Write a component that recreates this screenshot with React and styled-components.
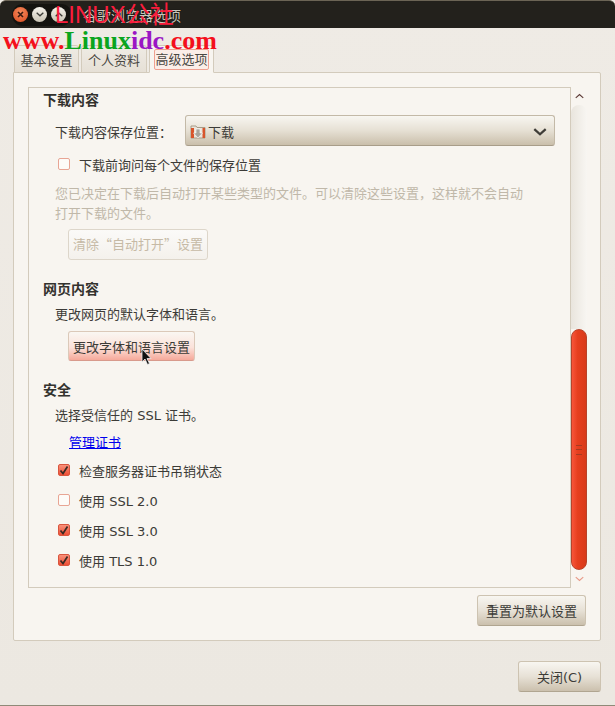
import styled, { createGlobalStyle } from 'styled-components';

const GlobalStyle = createGlobalStyle`
  html, body {
    margin: 0;
    padding: 0;
    background: #efebe4;
  }
  body {
    font-family: "DejaVu Sans", "Noto Sans CJK SC", sans-serif;
    font-size: 13px;
    color: #3c3b37;
  }
`;

const Window = styled.div`
  position: relative;
  width: 615px;
  height: 706px;
  display: flex;
  flex-direction: column;
  overflow: hidden;
  background: linear-gradient(#efebe5, #ece8e1);
  border-bottom: 1px solid #8f8a78;
  box-sizing: border-box;
`;

const TitleBar = styled.div`
  height: 28px;
  flex: none;
  display: flex;
  align-items: center;
  padding-left: 12px;
  background: #23211c;
  border-top: 1px solid #6b6455;
  border-radius: 6px 6px 0 0;
  box-sizing: border-box;
`;

const Controls = styled.div`
  display: flex;
  align-items: center;
  gap: 4px;
  height: 22px;
  width: 60px;
  padding-left: 1px;
  box-sizing: border-box;
  border-radius: 11px;
  background: #14130f;
`;

const Control = styled.span`
  width: 15px;
  height: 15px;
  border-radius: 50%;
  display: flex;
  align-items: center;
  justify-content: center;
  background: ${(p) =>
    p.$close
      ? 'radial-gradient(circle at 50% 35%, #f58a5c, #d94a1f)'
      : 'linear-gradient(#f6f3ec, #c9c3b4)'};
`;

const Title = styled.div`
  margin-left: 11px;
  font-size: 14px;
  color: #c9c6bd;
  text-shadow: 0 0 1px #000;
`;

const Body = styled.div`
  flex: 1;
  display: flex;
  flex-direction: column;
  padding: 17px 14px 0 13px;
  min-height: 0;
`;

const Tabs = styled.div`
  display: flex;
  gap: 2px;
  height: 28px;
  padding-left: 1px;
  position: relative;
  z-index: 1;
  margin-bottom: -1px;
`;

const Tab = styled.div`
  display: flex;
  align-items: center;
  justify-content: center;
  width: ${(p) => p.$width}px;
  box-sizing: border-box;
  padding-top: ${(p) => (p.$active ? 0 : 2)}px;
  border: 1px solid #d3cbbc;
  border-bottom: ${(p) => (p.$active ? '1px solid #f8f5f0' : '1px solid #d3cbbc')};
  border-radius: 3px 3px 0 0;
  background: ${(p) => (p.$active ? '#f8f5f0' : 'linear-gradient(#efebe4, #e6e0d6)')};
  color: #4a4843;
`;

const TabLabel = styled.span`
  height: 19px;
  line-height: 19px;
  width: 54px;
  text-align: center;
  ${(p) =>
    p.$active &&
    `
    border: 1px solid #f0a090;
    background: #fbeee8;
    border-radius: 2px;
    width: 53px;
  `}
`;

const Panel = styled.div`
  height: 569px;
  flex: none;
  box-sizing: border-box;
  background: #f8f5f0;
  border: 1px solid #d3cbbc;
  border-radius: 0 2px 2px 2px;
  padding: 14px 14px 0;
  display: flex;
  flex-direction: column;
`;

const ScrollRow = styled.div`
  display: flex;
  height: 501px;
  flex: none;
`;

const Frame = styled.div`
  width: 543px;
  flex: none;
  box-sizing: border-box;
  border: 1px solid #d3cbbc;
  padding-left: 14px;
  padding-top: 2px;
  display: flex;
  flex-direction: column;
  overflow: hidden;
`;

const Heading = styled.div`
  height: 20px;
  line-height: 20px;
  font-size: 14px;
  font-weight: 700;
  color: #33322e;
  margin-top: ${(p) => p.$top || 0}px;
`;

const Line = styled.div`
  height: 20px;
  line-height: 22px;
  padding-left: 12px;
  white-space: nowrap;
  margin-top: ${(p) => p.$top || 0}px;
  color: ${(p) => (p.$muted ? '#c0b8a9' : '#3c3b37')};
`;

const SelectRow = styled.div`
  display: flex;
  align-items: center;
  padding-left: 12px;
  margin-top: 5px;
`;

const SelectLabel = styled.span`
  width: 130px;
  flex: none;
  padding-top: 2px;
`;

const Select = styled.div`
  width: 370px;
  height: 31px;
  box-sizing: border-box;
  display: flex;
  align-items: center;
  gap: 2px;
  padding: 2px 7px 0 4px;
  border: 1px solid #c3b9a7;
  border-bottom-color: #a89d89;
  border-radius: 3px;
  background: linear-gradient(#f8f6f1, #e6e0d4 50%, #cabfab);
`;

const SelectValue = styled.span`
  flex: 1;
`;

const CheckRow = styled.label`
  display: flex;
  align-items: center;
  height: 20px;
  padding-left: 15px;
  margin-top: ${(p) => p.$top || 0}px;
`;

const Box = styled.span`
  width: 12px;
  height: 12px;
  flex: none;
  box-sizing: border-box;
  margin-right: 9px;
  border: 1px solid ${(p) => (p.$on ? '#d9553d' : '#e8a594')};
  border-radius: 2px;
  display: flex;
  align-items: center;
  justify-content: center;
  background: ${(p) => (p.$on ? 'linear-gradient(#f8907a, #ee4f35)' : '#fdfbf8')};
`;

const Button = styled.div`
  display: flex;
  align-items: center;
  justify-content: center;
  box-sizing: border-box;
  width: ${(p) => p.$width}px;
  height: 31px;
  flex: none;
  border: 1px solid #cdc3b1;
  border-bottom-color: #b0a590;
  border-radius: 3px;
  background: linear-gradient(#f8f6f1, #e7e1d6 50%, #cbc0ad);
  color: #3c3b37;
`;

const ClearButton = styled(Button)`
  margin: 6px 0 0 25px;
  padding-bottom: 2px;
  border-color: #ddd6ca;
  background: linear-gradient(#fbfaf8, #f4f1ec);
  color: #c6baa6;
  font-family: "Noto Sans CJK SC", sans-serif;
`;

const FontButton = styled(Button)`
  height: 30px;
  margin: 7px 0 0 25px;
  border-color: #dbc9b9;
  border-bottom-color: #d89a8c;
  background: linear-gradient(#faf7f2, #fbe2da 55%, #f6a99a);
`;

const Link = styled.a`
  display: block;
  width: max-content;
  height: 20px;
  line-height: 22px;
  margin: 7px 0 0 26px;
  color: #0000ee;
  text-decoration: underline;
`;

const Scrollbar = styled.div`
  width: 16px;
  display: flex;
  flex-direction: column;
  align-items: center;
`;

const Arrow = styled.div`
  height: ${(p) => p.$height}px;
  flex: none;
  display: flex;
  align-items: center;
  justify-content: center;
`;

const Track = styled.div`
  flex: 1;
  width: 16px;
  display: flex;
  flex-direction: column;
`;

const TrackFill = styled.div`
  flex: 1;
  border-radius: 8px 8px 0 0;
  background: linear-gradient(90deg, #e9e5dd, #f8f6f2);
`;

const Thumb = styled.div`
  height: 241px;
  flex: none;
  box-sizing: border-box;
  border: 1px solid #b8432a;
  border-radius: 8px;
  background: linear-gradient(90deg, #f7553a, #e63f1e 40%, #d83a1a);
  display: flex;
  align-items: center;
  justify-content: center;
`;

const Grip = styled.div`
  width: 6px;
  height: 8px;
  border-top: 1px solid #a83a20;
  border-bottom: 1px solid #a83a20;
  &::after {
    content: '';
    display: block;
    height: 1px;
    margin-top: 3px;
    background: #a83a20;
  }
`;

const PanelFooter = styled.div`
  display: flex;
  justify-content: flex-end;
  padding-top: 7px;
`;

const Footer = styled.div`
  display: flex;
  justify-content: flex-end;
  padding-top: 20px;
`;

const WatermarkTop = styled.div`
  position: absolute;
  z-index: 2;
  left: 55px;
  top: 1px;
  font-family: "Liberation Sans", "Noto Sans CJK SC", sans-serif;
  font-size: 24px;
  line-height: 28px;
  color: #fb1c3c;
  white-space: nowrap;
`;

const Watermark = styled.div`
  position: absolute;
  z-index: 2;
  left: 3px;
  top: 26px;
  font-family: "Liberation Serif", serif;
  font-size: 26px;
  font-weight: 700;
  line-height: 30px;
  white-space: nowrap;
  color: #f4101c;
`;

const Mark = styled.span`
  color: ${(p) => p.$color};
`;

const Cursor = styled.svg`
  position: absolute;
  z-index: 2;
  left: 141px;
  top: 348px;
`;

function Tick() {
  return (
    <svg width="10" height="10" viewBox="0 0 10 10">
      <path d="M1.5 5.5 L4 8.5 L8.5 1.5" fill="none" stroke="#3a2a24" strokeWidth="1.7" />
    </svg>
  );
}

function Check({ on, label, top }) {
  return (
    <CheckRow $top={top}>
      <Box $on={on}>{on && <Tick />}</Box>
      {label}
    </CheckRow>
  );
}

function Chevron({ up, color, width = 12, height = 7, weight = 2 }) {
  return (
    <svg width={width} height={height} viewBox="0 0 12 7">
      <path
        d={up ? 'M1 6 L6 1.5 L11 6' : 'M1 1 L6 5.5 L11 1'}
        fill="none"
        stroke={color}
        strokeWidth={weight}
      />
    </svg>
  );
}

function FolderIcon() {
  return (
    <svg width="16" height="16" viewBox="0 0 16 16">
      <path d="M1 2 H6 L7 3.5 H15 V14 H1 Z" fill="#e9e4da" stroke="#a89c88" />
      <rect x="1" y="4" width="3" height="10" fill="#d8552c" />
      <rect x="12.5" y="4" width="2.5" height="10" fill="#d8552c" />
      <path d="M6 5 H10 V9 H12.5 L8 14 L3.5 9 H6 Z" fill="#a9a59c" stroke="#fff" strokeWidth="0.6" />
    </svg>
  );
}

export default function App() {
  return (
    <Window>
      <GlobalStyle />
      <TitleBar>
        <Controls>
          <Control $close>
            <svg width="7" height="7" viewBox="0 0 7 7">
              <path d="M1 1 L6 6 M6 1 L1 6" stroke="#3a1a10" strokeWidth="1.6" />
            </svg>
          </Control>
          <Control>
            <Chevron color="#3c3b37" width="8" height="5" weight="2" />
          </Control>
          <Control>
            <Chevron up color="#3c3b37" width="8" height="5" weight="2" />
          </Control>
        </Controls>
        <Title>谷歌浏览器选项</Title>
      </TitleBar>
      <Body>
        <Tabs>
          <Tab $width={65}>
            <TabLabel>基本设置</TabLabel>
          </Tab>
          <Tab $width={66}>
            <TabLabel>个人资料</TabLabel>
          </Tab>
          <Tab $width={65} $active>
            <TabLabel $active>高级选项</TabLabel>
          </Tab>
        </Tabs>
        <Panel>
          <ScrollRow>
            <Frame>
              <Heading>下载内容</Heading>
              <SelectRow>
                <SelectLabel>下载内容保存位置：</SelectLabel>
                <Select>
                  <FolderIcon />
                  <SelectValue>下载</SelectValue>
                  <Chevron color="#3f3d38" width="14" height="8" />
                </Select>
              </SelectRow>
              <Check label="下载前询问每个文件的保存位置" top={8} />
              <Line $muted $top={9}>您已决定在下载后自动打开某些类型的文件。可以清除这些设置，这样就不会自动</Line>
              <Line $muted>打开下载的文件。</Line>
              <ClearButton $width={140}>清除“自动打开”设置</ClearButton>
              <Heading $top={19}>网页内容</Heading>
              <Line $top={5}>更改网页的默认字体和语言。</Line>
              <FontButton $width={127}>更改字体和语言设置</FontButton>
              <Heading $top={19}>安全</Heading>
              <Line $top={5}>选择受信任的 SSL 证书。</Line>
              <Link>管理证书</Link>
              <Check on label="检查服务器证书吊销状态" top={8} />
              <Check label="使用 SSL 2.0" top={10} />
              <Check on label="使用 SSL 3.0" top={10} />
              <Check on label="使用 TLS 1.0" top={10} />
            </Frame>
            <Scrollbar>
              <Arrow $height={18}>
                <Chevron up color="#5c3a36" width="9" height="6" weight="1.5" />
              </Arrow>
              <Track>
                <TrackFill />
                <Thumb>
                  <Grip />
                </Thumb>
              </Track>
              <Arrow $height={18}>
                <Chevron color="#e89a88" width="9" height="6" weight="1.5" />
              </Arrow>
            </Scrollbar>
          </ScrollRow>
          <PanelFooter>
            <Button $width={109}>重置为默认设置</Button>
          </PanelFooter>
        </Panel>
        <Footer>
          <Button $width={83}>关闭(C)</Button>
        </Footer>
      </Body>
      <WatermarkTop>LINUX公社</WatermarkTop>
      <Watermark>
        www.<Mark $color="#0aa51e">Linux</Mark>
        <Mark $color="#9a16c4">idc</Mark>.com
      </Watermark>
      <Cursor width="12" height="18" viewBox="0 0 12 18">
        <path d="M1 1 V14 L4 11 L6.5 16.5 L8.5 15.5 L6 10.5 H10 Z" fill="#111" stroke="#eee" strokeWidth="0.8" />
      </Cursor>
    </Window>
  );
}
